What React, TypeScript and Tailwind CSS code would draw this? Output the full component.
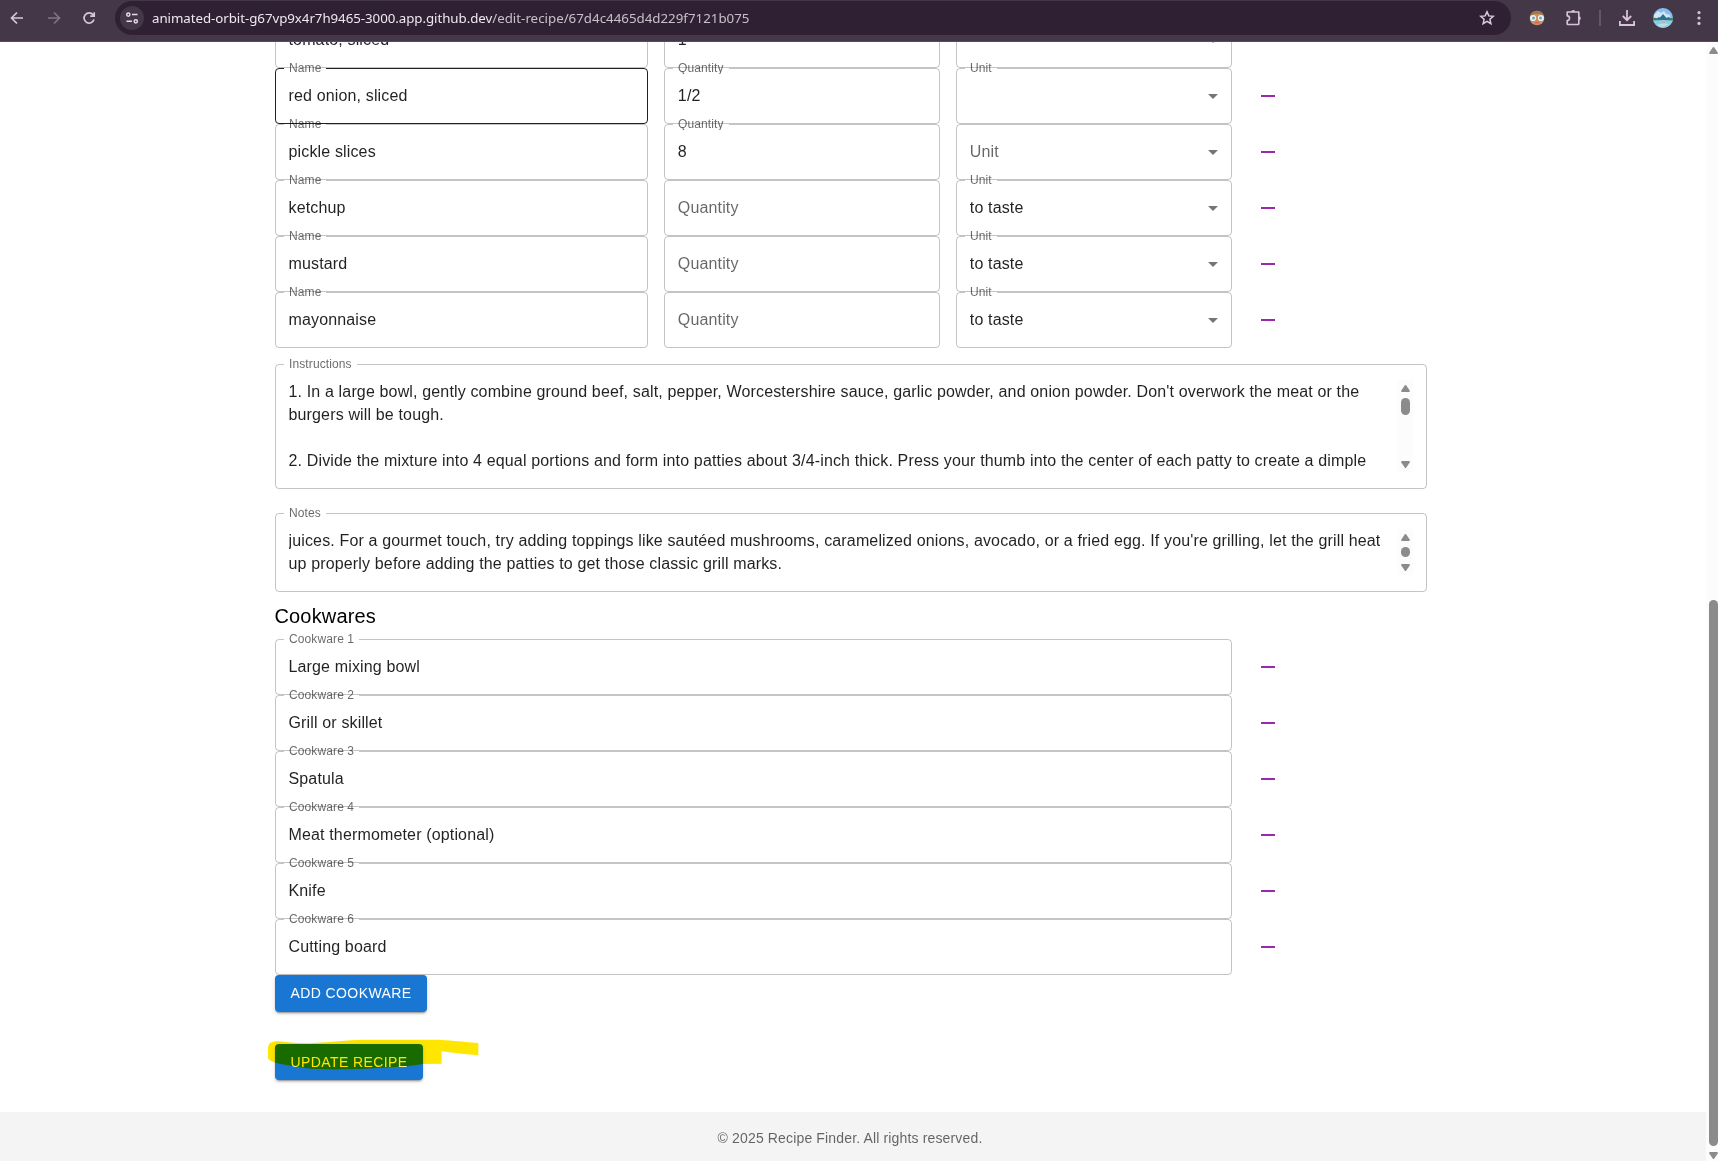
import React from "react";

function Outline({ label, notched, dark }: { label: string; notched: boolean; dark?: boolean }) {
  return (
    <>
      <label
        className={
          notched
            ? "pointer-events-none absolute left-[14px] top-[-9px] origin-top-left scale-75 whitespace-nowrap text-base leading-[23px] text-black/60"
            : "pointer-events-none absolute left-[14px] top-4 whitespace-nowrap text-base leading-[23px] text-black/60"
        }
      >
        {label}
      </label>
      {notched ? (
        <fieldset
          className={
            dark
              ? "pointer-events-none absolute inset-x-0 bottom-0 top-[-5px] min-w-0 overflow-hidden rounded border border-black/87 px-2"
              : "pointer-events-none absolute inset-x-0 bottom-0 top-[-5px] min-w-0 overflow-hidden rounded border border-black/23 px-2"
          }
        >
          <legend className="invisible block h-[11px] overflow-hidden whitespace-nowrap p-0 text-xs">
            <span className="inline-block px-[5px] opacity-0">{label}</span>
          </legend>
        </fieldset>
      ) : (
        <div className="pointer-events-none absolute inset-0 rounded border border-black/23" />
      )}
    </>
  );
}

function Field({ label, value, dark, select }: { label: string; value: string; dark?: boolean; select?: boolean }) {
  const notched = value !== "";
  return (
    <div className="relative h-14 px-[14px] py-4">
      <div className="h-[23px] whitespace-pre leading-[23px] text-black/87">{value}</div>
      <Outline label={label} notched={notched} dark={dark} />
      {select && (
        <svg className="absolute right-[7px] top-4 size-6 fill-black/54" viewBox="0 0 24 24">
          <path d="m7 10 5 5 5-5z" />
        </svg>
      )}
    </div>
  );
}

function RemoveButton() {
  return (
    <button className="flex size-10 items-center justify-center self-center" aria-label="Remove">
      <svg className="size-6 fill-[#9c27b0]" viewBox="0 0 24 24">
        <path d="M19 13H5v-2h14z" />
      </svg>
    </button>
  );
}

function Triangle({ down }: { down?: boolean }) {
  return (
    <svg className={down ? "h-[7px] w-[9px] shrink-0 rotate-180" : "h-[7px] w-[9px] shrink-0"} viewBox="0 0 9 7">
      <path d="M3.7.6Q4.5-.4 5.3.6L8.7 5.4Q9.3 7 7.9 7H1.1Q-.3 7 .3 5.4Z" fill="#8b8b8b" />
    </svg>
  );
}

function Button({ children }: { children: string }) {
  return (
    <button className="h-[36.5px] rounded bg-[#1976d2] px-4 py-1.5 text-sm leading-[24.5px] tracking-[0.02857em] text-white uppercase shadow-[0_3px_1px_-2px_rgba(0,0,0,0.2),0_2px_2px_0_rgba(0,0,0,0.14),0_1px_5px_0_rgba(0,0,0,0.12)]">
      {children}
    </button>
  );
}

const ingredients = [
  { name: "tomato, sliced", qty: "1", unit: " " },
  { name: "red onion, sliced", qty: "1/2", unit: " ", active: true },
  { name: "pickle slices", qty: "8", unit: "" },
  { name: "ketchup", qty: "", unit: "to taste" },
  { name: "mustard", qty: "", unit: "to taste" },
  { name: "mayonnaise", qty: "", unit: "to taste" },
];

const cookwares = ["Large mixing bowl", "Grill or skillet", "Spatula", "Meat thermometer (optional)", "Knife", "Cutting board"];

function BrowserBar() {
  return (
    <header className="relative z-10 flex h-[42px] shrink-0 items-start border-b border-[#574c5a] bg-[#443848] text-[#d9c3dc]">
      <div className="flex h-9 w-[115px] shrink-0 items-center">
        <svg className="ml-[9px] size-4" viewBox="0 0 16 16" fill="none" stroke="#d9c6dd" strokeWidth="1.7">
          <path d="M14 8H3M8 2.5 2.5 8 8 13.5" />
        </svg>
        <svg className="ml-[21px] size-4" viewBox="0 0 16 16" fill="none" stroke="#82738a" strokeWidth="1.7">
          <path d="M2 8h11M8 2.5 13.5 8 8 13.5" />
        </svg>
        <svg className="ml-[19px] size-4" viewBox="0 0 16 16" fill="none" stroke="#d9c6dd" strokeWidth="1.7">
          <path d="M13 9.6a5.1 5.1 0 1 1-.9-4.900L13 5.6M13.2 2.2v4H9.2" />
        </svg>
      </div>
      <div className="mt-px flex h-[34px] w-[1396px] shrink-0 items-center rounded-full bg-[#2f2133]">
        <div className="ml-[5px] flex size-6 items-center justify-center rounded-full bg-[#443848]">
          <svg className="size-[14px]" viewBox="0 0 14 14" fill="none" stroke="#e6dce8" strokeWidth="1.5">
            <circle cx="3.3" cy="3.6" r="1.6" />
            <path d="M7 3.6h5.5M1.5 10.3H7" />
            <circle cx="10.8" cy="10.3" r="1.6" />
          </svg>
        </div>
        <div className="ml-2 w-[1210px] whitespace-nowrap font-['Noto_Sans',sans-serif] text-[13.3px] leading-5 tracking-[0.01px] text-[#c9bfcb]">
          <span className="tracking-[-0.05px] text-[#efe7f0]">animated-orbit-g67vp9x4r7h9465-3000.app.github.dev</span>/edit-recipe/67d4c4465d4d229f7121b075
        </div>
        <svg className="ml-[117px] size-4" viewBox="0 0 16 16" fill="none" stroke="#d9cedb" strokeWidth="1.5">
          <path d="m8 1.8 1.8 4.1 4.5.4-3.4 3 1 4.4L8 11.4l-3.9 2.3 1-4.4-3.4-3 4.5-.4z" />
        </svg>
      </div>
      <div className="flex h-9 flex-1 items-center">
        <svg className="ml-[18px] size-4" viewBox="0 0 16 16">
          <circle cx="8" cy="8" r="7.3" fill="#d28a62" />
          <path d="M1 6.5A7.3 7.3 0 0 1 15 6.5L12 4.5H4z" fill="#96784f" />
          <path d="M4.5 3.8h7v2h-7z" fill="#c98f68" />
          <circle cx="4.1" cy="8" r="3.1" fill="#e6f1f1" />
          <circle cx="11.9" cy="8" r="3.1" fill="#e6f1f1" />
          <circle cx="4.5" cy="8" r="1.5" fill="#6aaab2" />
          <circle cx="11.5" cy="8" r="1.5" fill="#6aaab2" />
          <path d="M6 12.7h4" stroke="#c4604c" />
        </svg>
        <svg className="ml-5 size-[18px]" viewBox="0 0 18 18" fill="none" stroke="#d9c3dc" strokeWidth="1.6">
          <path d="M2.2 3h11.6v11.8q0 .7-.7.7H2.9q-.7 0-.7-.7v-3.3a2.3 2.3 0 0 0 0-4.6z" strokeLinejoin="round" />
          <path d="M6.2 3a2 2 0 0 1 4 0zM13.8 7.3a2 2 0 0 1 0 4z" fill="#d9c3dc" stroke="none" />
        </svg>
        <div className="ml-4 h-4 w-0.5 bg-[#645568]" />
        <svg className="ml-[17px] size-[18px]" viewBox="0 0 18 18" fill="none" stroke="#d9c3dc" strokeWidth="1.8">
          <path d="M9 1v10M4.8 7 9 11.2 13.2 7M1.9 12v4h14.2v-4" />
        </svg>
        <svg className="ml-[17px] size-5" viewBox="0 0 20 20">
          <defs>
            <clipPath id="avatar">
              <circle cx="10" cy="10" r="10" />
            </clipPath>
          </defs>
          <g clipPath="url(#avatar)">
            <path d="M0 0h20v20H0z" fill="#86bfee" />
            <path d="M1 7 5 3l3 2 3-2 2 3 4 1v3H1z" fill="#d3e6f5" />
            <path d="m3 11 3-2 1 .5L10 6l3.5 4 2-1 3.500 2v2H3z" fill="#2f6f94" />
            <path d="M0 9.500q3 0 6 2l4 .5 4-.5q3-2 6-1.500V13H0z" fill="#3f8065" />
            <path d="M0 12.500q10-.8 20 0V20H0z" fill="#8acde6" />
            <path d="M4 17q6-3 12-.5L9 19z" fill="#b9e0ea" />
            <path d="M9 14.600h3" stroke="#dc9f85" />
          </g>
        </svg>
        <svg className="ml-[18px] size-4" viewBox="0 0 16 16" fill="#d9c3dc">
          <circle cx="8" cy="2.6" r="1.6" />
          <circle cx="8" cy="8" r="1.6" />
          <circle cx="8" cy="13.4" r="1.6" />
        </svg>
      </div>
    </header>
  );
}

export default function App() {
  return (
    <div className="flex h-[1161px] w-[1718px] flex-col overflow-hidden bg-white font-['Liberation_Sans',Arial,sans-serif] text-base tracking-[0.00938em] text-black">
      <BrowserBar />
      <div className="flex h-[1119px]">
        <div className="flex w-[1706px] flex-col">
          <main className="-mt-[30px] ml-[274.5px] flex w-[1152px] shrink-0 flex-col">
            {ingredients.map((row) => (
              <div key={row.name} className="grid grid-cols-[373.33px_276px_276px_40px] gap-4">
                <Field label="Name" value={row.name} dark={row.active} />
                <Field label="Quantity" value={row.qty} />
                <Field label="Unit" value={row.unit} select />
                <RemoveButton />
              </div>
            ))}

            <div className="relative mt-4 flex h-[125px] justify-between px-[14px] py-4">
              <div className="h-[92px] overflow-hidden whitespace-nowrap leading-[23px] text-black/87">
                1. In a large bowl, gently combine ground beef, salt, pepper, Worcestershire sauce, garlic powder, and onion powder. Don't overwork the meat or the
                <br />
                burgers will be tough.
                <br />
                <br />
                2. Divide the mixture into 4 equal portions and form into patties about 3/4-inch thick. Press your thumb into the center of each patty to create a dimple
              </div>
              <div className="flex h-[92px] w-[15px] shrink-0 flex-col items-center bg-[#fcfcfc] pb-1 pt-[5px]">
                <Triangle />
                <div className="mt-1.5 h-[17px] w-[9px] rounded-full bg-[#8b8b8b]" />
                <div className="flex-1" />
                <Triangle down />
              </div>
              <Outline label="Instructions" notched />
            </div>

            <div className="relative mt-6 flex h-[79px] justify-between px-[14px] py-4">
              <div className="h-[46px] overflow-hidden whitespace-nowrap leading-[23px] text-black/87">
                juices. For a gourmet touch, try adding toppings like sautéed mushrooms, caramelized onions, avocado, or a fried egg. If you're grilling, let the grill heat
                <br />
                up properly before adding the patties to get those classic grill marks.
              </div>
              <div className="flex h-[46px] w-[15px] shrink-0 flex-col items-center bg-[#fcfcfc] pb-1 pt-[5px]">
                <Triangle />
                <div className="mt-1.5 h-[10px] w-[9px] rounded-full bg-[#8b8b8b]" />
                <div className="flex-1" />
                <Triangle down />
              </div>
              <Outline label="Notes" notched />
            </div>

            <h6 className="mb-[7px] mt-2 text-xl leading-8 tracking-[0.0075em]">Cookwares</h6>
            {cookwares.map((item, i) => (
              <div key={item} className="grid grid-cols-[957.33px_40px] gap-4">
                <Field label={`Cookware ${i + 1}`} value={item} />
                <RemoveButton />
              </div>
            ))}
            <div className="flex">
              <Button>Add Cookware</Button>
            </div>
            <div className="relative mt-8 flex">
              <Button>Update Recipe</Button>
              <svg className="pointer-events-none absolute left-[-7px] top-[-4.5px] h-8 w-[212px] mix-blend-multiply" viewBox="53 237 636 96">
                <path
                  d="M53 262Q54 246 75 244Q90 243 105 246Q150 251 190 249Q215 248 240 246L300 241L340 239H565Q600 241 684 249V286L640 282L574 274V311L519 312L470 319L370 325Q325 328 280 328Q240 329 200 327Q165 325 140 320L90 312Q53 303 53 294Z"
                  fill="#ffe600"
                />
              </svg>
            </div>
          </main>
          <footer className="mt-8 flex min-h-0 flex-1 justify-center bg-[#f4f4f4] pr-[6px] pt-4">
            <p className="text-sm leading-5 tracking-[0.01071em] text-black/60">© 2025 Recipe Finder. All rights reserved.</p>
          </footer>
        </div>
        <div className="flex w-3 flex-col overflow-hidden bg-[#fcfcfc] pb-0.5 pl-[3px] pt-[5px]">
          <Triangle />
          <div className="mt-[546px] h-[546px] w-[9px] rounded-full bg-[#8b8b8b]" />
          <div className="flex-1" />
          <Triangle down />
        </div>
      </div>
    </div>
  );
}
